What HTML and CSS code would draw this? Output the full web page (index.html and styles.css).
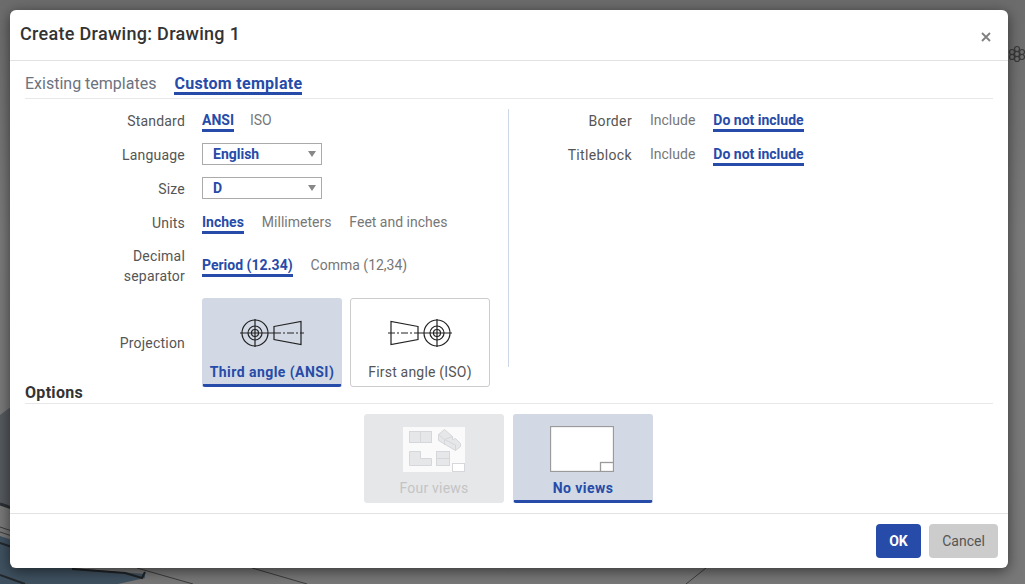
FILE: index.html
```html
<!DOCTYPE html>
<html>
    <head>
        <title>Create Drawing</title>
        <link rel="stylesheet" href="styles.css">
    </head>
    <body>
        <svg class="backdrop" width="1025" height="584" viewBox="0 0 1025 584">
            <path d="M0 415 L12 406 V505 H0 Z" fill="#555a5e"/>
            <path d="M0 504 L12 508" stroke="#2b2f33" stroke-width="3"/>
            <path d="M0 527 L12 531 M0 532 L12 536" stroke="#3a3d40" stroke-width="1"/>
            <path d="M0 536 L12 540 V568 H72 L145 574 V578 L118 584 H0 Z" fill="#3f5160"/>
            <path d="M0 543 L12 547 M0 575 L25 584" stroke="#23282c" stroke-width="2"/>
            <path d="M72 569 L125 573 L142 578 L145 572" fill="none" stroke="#1f2326" stroke-width="2"/>
            <path d="M137 568 L193 584 M252 568 L307 584 M706 568 L686 584" stroke="#3c3c3c" stroke-width="1"/>
            <g fill="none" stroke="#3a3a3a" stroke-width="1.2">
                <circle cx="1012" cy="52" r="2.5"/>
                <circle cx="1012" cy="57" r="2.500"/>
                <circle cx="1017" cy="49" r="2.500"/>
                <circle cx="1017" cy="54" r="2.500"/>
                <circle cx="1017" cy="59" r="2.500"/>
                <circle cx="1022" cy="52" r="2.500"/>
                <circle cx="1022" cy="57" r="2.500"/>
            </g>
        </svg>
        <div class="dialog">
            <div class="dialog-head">
                <h1>Create Drawing: Drawing 1</h1>
                <svg class="close" width="10" height="10" viewBox="0 0 10 10">
                    <path d="M1 1L9 9M9 1L1 9" stroke="#808080" stroke-width="1.800"/>
                </svg>
            </div>
            <div class="dialog-body">
                <div class="tabs">
                    <span class="tab">Existing templates</span>
                    <span class="tab tab-on">Custom template</span>
                </div>
                <div class="columns">
                    <div class="col-left">
                        <div class="row">
                            <label class="lbl">Standard</label>
                            <div class="choices choices-tight">
                                <span class="choice on">ANSI</span>
                                <span class="choice">ISO</span>
                            </div>
                        </div>
                        <div class="row">
                            <label class="lbl">Language</label>
                            <div class="select">English</div>
                        </div>
                        <div class="row">
                            <label class="lbl">Size</label>
                            <div class="select">D</div>
                        </div>
                        <div class="row">
                            <label class="lbl">Units</label>
                            <div class="choices">
                                <span class="choice on">Inches</span>
                                <span class="choice">Millimeters</span>
                                <span class="choice">Feet and inches</span>
                            </div>
                        </div>
                        <div class="row row-decimal">
                            <label class="lbl">Decimal<br>separator</label>
                            <div class="choices">
                                <span class="choice on">Period (12.34)</span>
                                <span class="choice">Comma (12,34)</span>
                            </div>
                        </div>
                        <div class="row row-cards">
                            <label class="lbl">Projection</label>
                            <div class="cards">
                                <div class="card card-on">
                                    <svg width="64" height="28" viewBox="0 0 64 28" fill="none" stroke="#222" stroke-width="1.200">
                                        <circle cx="15" cy="14" r="13"/>
                                        <circle cx="15" cy="14" r="7"/>
                                        <circle cx="15" cy="14" r="3.500"/>
                                        <path d="M0 14H34M15 0V28"/>
                                        <path d="M34 7.500L61 2.500V25.500L34 20.500Z"/>
                                        <path d="M34 14H64" stroke-dasharray="7 2 2 2"/>
                                    </svg>
                                    <span>Third angle (ANSI)</span>
                                </div>
                                <div class="card">
                                    <svg width="64" height="28" viewBox="0 0 64 28" fill="none" stroke="#222" stroke-width="1.200">
                                        <circle cx="49" cy="14" r="13"/>
                                        <circle cx="49" cy="14" r="7"/>
                                        <circle cx="49" cy="14" r="3.500"/>
                                        <path d="M64 14H30M49 0V28"/>
                                        <path d="M30 7.500L3 2.500V25.500L30 20.500Z"/>
                                        <path d="M0 14H30" stroke-dasharray="7 2 2 2"/>
                                    </svg>
                                    <span>First angle (ISO)</span>
                                </div>
                            </div>
                        </div>
                    </div>
                    <div class="divider"></div>
                    <div class="col-right">
                        <div class="row">
                            <label class="lbl lbl-right">Border</label>
                            <div class="choices">
                                <span class="choice">Include</span>
                                <span class="choice on">Do not include</span>
                            </div>
                        </div>
                        <div class="row">
                            <label class="lbl lbl-right">Titleblock</label>
                            <div class="choices">
                                <span class="choice">Include</span>
                                <span class="choice on">Do not include</span>
                            </div>
                        </div>
                    </div>
                </div>
                <div class="section">Options</div>
                <div class="cards cards-options">
                    <div class="card card-off">
                        <svg width="64" height="46" viewBox="0 0 64 46">
                            <rect x="1" y="1" width="62" height="45" fill="#fff" opacity=".8"/>
                            <g fill="#e6e7e9" stroke="#d6d7da">
                                <rect x="7.500" y="5.500" width="22" height="11"/>
                                <path d="M18.500 5.500V16.500"/>
                                <path d="M7.500 25.500H18.500V32.500H29.500V39.500H7.500Z"/>
                                <rect x="34.500" y="25.500" width="13" height="14"/>
                                <path d="M34.500 32.500H47.500"/>
                                <path d="M36.500 8.500L42.500 3.500L50.500 10.500V13.500L53.500 12.500L58.500 17.500V20.500L53.500 24.500L36.500 14.500Z"/>
                                <path d="M36.500 8.500L42.500 13.500V19M42.500 13.500L50.500 10.500M53.500 24.500V19L42.500 13.500" fill="none"/>
                            </g>
                            <rect x="50.500" y="37.500" width="12" height="8" fill="#fff" stroke="#d6d7da"/>
                        </svg>
                        <span>Four views</span>
                    </div>
                    <div class="card card-on">
                        <svg class="icon-blank" width="64" height="46" viewBox="0 0 64 46">
                            <rect x=".5" y=".5" width="63" height="45" fill="#fff" stroke="#9a9a9a" stroke-width="1.300"/>
                            <rect x="50.500" y="36.500" width="13" height="9" fill="#fff" stroke="#9a9a9a" stroke-width="1.300"/>
                        </svg>
                        <span>No views</span>
                    </div>
                </div>
            </div>
            <div class="dialog-foot">
                <button class="btn btn-ok">OK</button>
                <button class="btn btn-cancel">Cancel</button>
            </div>
        </div>
    </body>
</html>
```

FILE: styles.css
```css
html, body {
    margin: 0;
    height: 100%;
    overflow: hidden;
}
body {
    position: relative;
    background: linear-gradient(#6c6c6c, #7a7a7a 40%, #787878);
    font-family: Roboto, "Liberation Sans", sans-serif;
    font-size: 14px;
    color: #555;
}
.backdrop {
    position: absolute;
    left: 0;
    top: 0;
}
.dialog {
    position: absolute;
    left: 10px;
    top: 10px;
    width: 998px;
    height: 558px;
    background-color: #fff;
    border-radius: 6px;
    box-shadow: 0 3px 14px rgba(0, 0, 0, 0.55);
    display: flex;
    flex-direction: column;
}
.dialog-head {
    height: 51px;
    box-sizing: border-box;
    border-bottom: 1px solid #e2e2e2;
    display: flex;
    align-items: center;
    justify-content: space-between;
    padding: 0 17px 4px 10px;
    flex-shrink: 0;
}
h1 {
    margin: 0;
    font-size: 18px;
    font-weight: 500;
    letter-spacing: 0.3px;
    color: #333;
}
.close {
    margin-top: 8px;
}
.dialog-body {
    flex: 1;
    padding: 0 15px;
}
.tabs {
    height: 38px;
    border-bottom: 1px solid #e8e8e8;
    display: flex;
    align-items: flex-end;
    gap: 18px;
    box-sizing: border-box;
}
.tab {
    font-size: 16px;
    color: #6b7280;
    line-height: 16px;
    border-bottom: 3px solid transparent;
    margin-bottom: 3px;
}
.tab-on {
    color: #264ba8;
    font-weight: 700;
    letter-spacing: 0.3px;
    border-bottom-color: #264ba8;
}
.columns {
    display: flex;
    height: 284px;
    padding-top: 5px;
    box-sizing: border-box;
}
.col-left {
    width: 483px;
    flex-shrink: 0;
}
.divider {
    width: 1px;
    height: 258px;
    margin-top: 5px;
    background-color: #ccd6e6;
}
.row {
    display: flex;
    align-items: center;
    height: 34px;
}
.row-decimal {
    height: 52px;
}
.row-cards {
    margin-top: 6px;
    height: 89px;
}
.lbl {
    width: 177px;
    padding-right: 17px;
    box-sizing: border-box;
    text-align: right;
    color: #555;
    line-height: 20px;
    letter-spacing: 0.2px;
    flex-shrink: 0;
}
.lbl-right {
    width: 123px;
    padding-right: 0;
    margin-right: 18px;
    letter-spacing: 0.35px;
}
.choices {
    display: flex;
    gap: 18px;
}
.choices-tight {
    gap: 16px;
}
.choice {
    color: #777;
    border-bottom: 3px solid transparent;
    line-height: 18px;
}
.choice.on {
    color: #264ba8;
    font-weight: 700;
    border-bottom-color: #264ba8;
}
.select {
    position: relative;
    width: 120px;
    height: 22px;
    box-sizing: border-box;
    border: 1px solid #aaa;
    color: #264ba8;
    font-weight: 700;
    padding-left: 10px;
    line-height: 20px;
    margin-top: -2px;
}
.select::after {
    content: "";
    position: absolute;
    right: 5px;
    top: 7px;
    border-left: 4px solid transparent;
    border-right: 4px solid transparent;
    border-top: 6px solid #888;
}
.cards {
    display: flex;
    gap: 8px;
}
.card {
    width: 140px;
    height: 89px;
    box-sizing: border-box;
    border: 1px solid #ccc;
    border-radius: 3px;
    display: flex;
    flex-direction: column;
    align-items: center;
    color: #555;
    padding-top: 20px;
    letter-spacing: 0.2px;
}
.card span {
    line-height: 18px;
    margin-top: auto;
    margin-bottom: 5px;
}
.card-on {
    background-color: #d2d9e4;
    border-color: #d2d9e4;
    border-bottom: 3px solid #264ba8;
    color: #264ba8;
    font-weight: 700;
    letter-spacing: 0.45px;
}
.card-on span {
    margin-bottom: 3px;
}
.card-off {
    background-color: #e6e7e9;
    border-color: #e6e7e9;
    color: #c4c4c4;
}
.icon-blank {
    margin-right: 2px;
}
.section {
    font-size: 16px;
    font-weight: 700;
    letter-spacing: 0.3px;
    color: #333;
    height: 21px;
    line-height: 19px;
    border-bottom: 1px solid #e8e8e8;
    box-sizing: border-box;
}
.cards-options {
    justify-content: center;
    gap: 9px;
    margin-top: 10px;
    padding-right: 1px;
}
.cards-options .card {
    padding-top: 11px;
}
.dialog-foot {
    height: 55px;
    border-top: 1px solid #e2e2e2;
    box-sizing: border-box;
    display: flex;
    justify-content: flex-end;
    align-items: center;
    gap: 8px;
    padding-right: 10px;
    flex-shrink: 0;
}
.btn {
    height: 34px;
    border: none;
    border-radius: 4px;
    font-family: inherit;
    font-size: 14px;
}
.btn-ok {
    width: 45px;
    background-color: #264ba8;
    color: #fff;
    font-weight: 700;
}
.btn-cancel {
    width: 69px;
    background-color: #ccc;
    color: #555;
}
```
